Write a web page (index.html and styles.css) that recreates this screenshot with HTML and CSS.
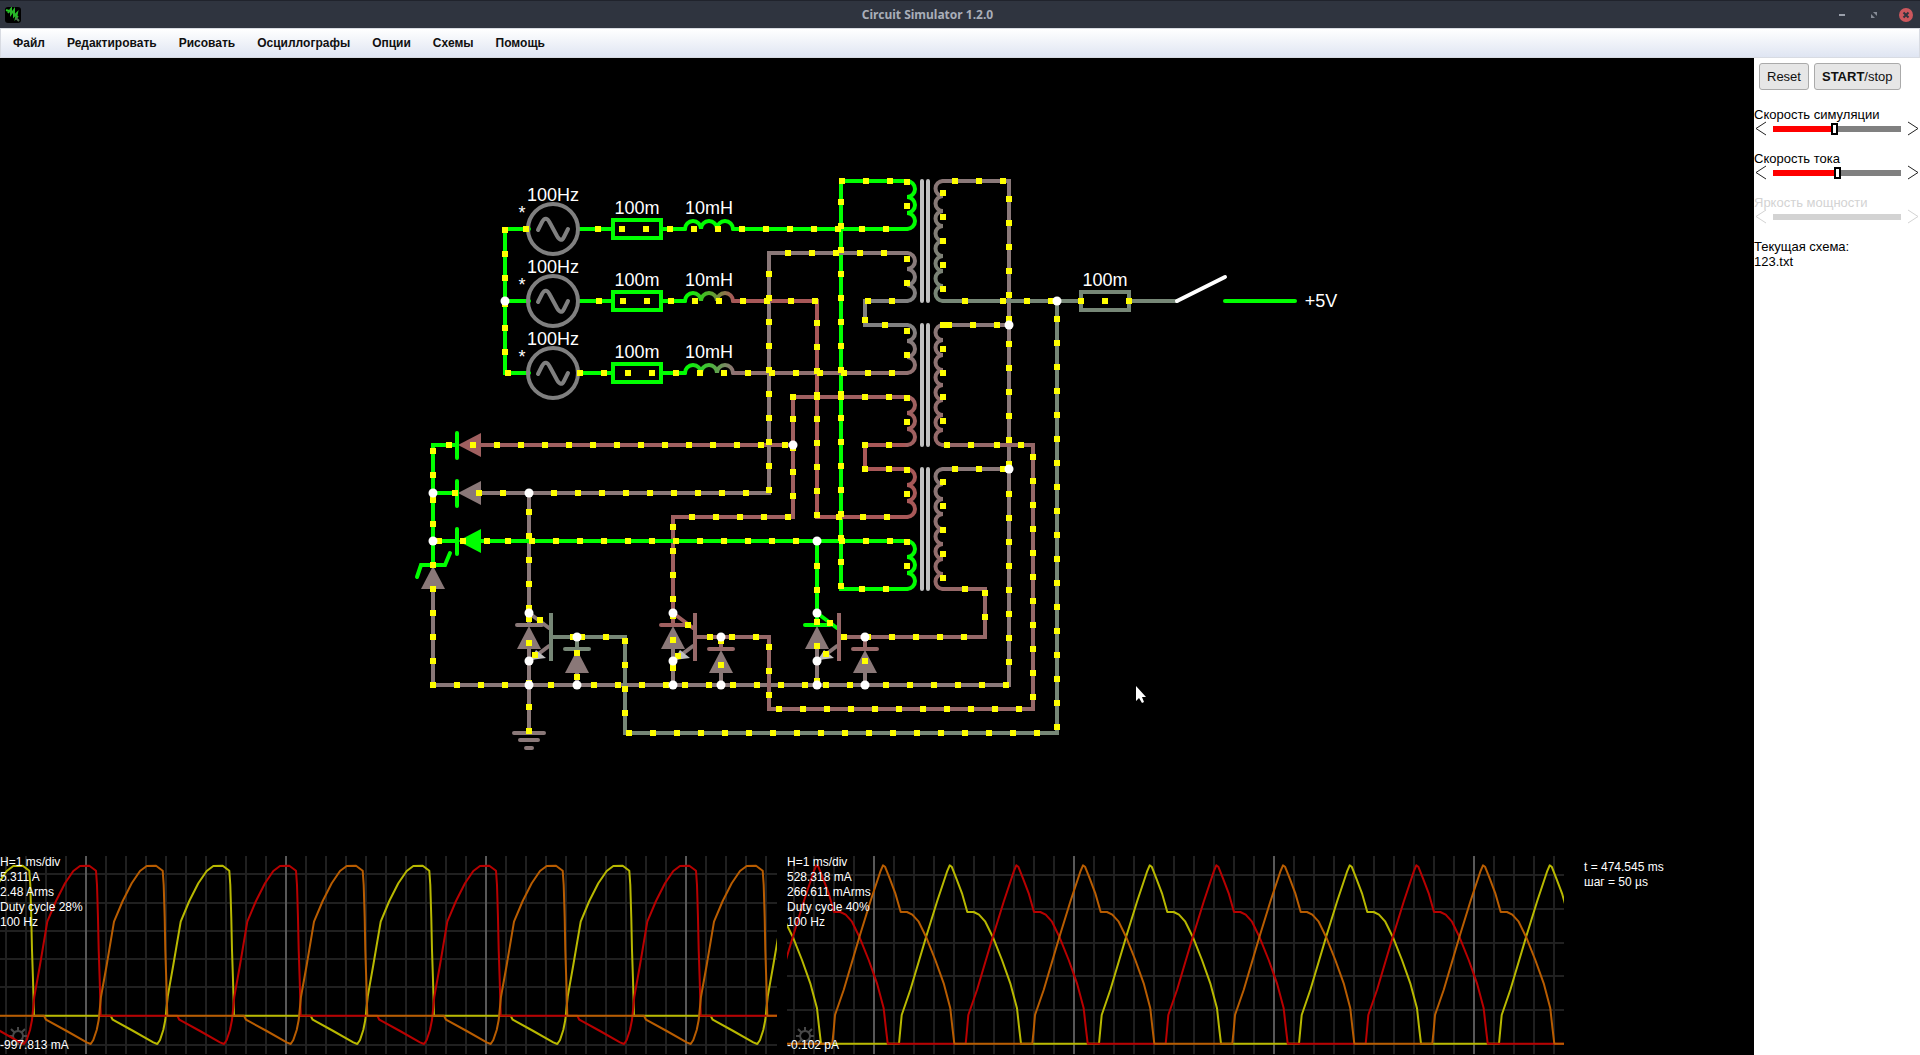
FILE: index.html
```html
<!DOCTYPE html>
<html lang="ru">
<head>
<meta charset="utf-8">
<title>Circuit Simulator 1.2.0</title>
<link rel="stylesheet" href="styles.css">
</head>
<body>
<header class="titlebar">
  <svg class="app-icon" width="16" height="16" viewBox="0 0 16 16"><rect width="16" height="16" rx="3" fill="#000"/><path d="M1 3l3 1" stroke="#20d020" stroke-width="2"/><path d="M3 6l3-4v5l3-4v6l3-3-1 5 2-2" fill="none" stroke="#28b828" stroke-width="2"/><path d="M11 11l3 3" stroke="#507050" stroke-width="2"/></svg>
  <h1 class="title">Circuit Simulator 1.2.0</h1>
  <div class="window-controls">
    <button class="win" aria-label="Minimize"><svg width="16" height="16"><path d="M5 8h6" stroke="#9a9faa" stroke-width="2"/></svg></button>
    <button class="win" aria-label="Restore"><svg width="16" height="16"><path d="M7 5h4v4zM5 7v4h4z" fill="#868b96"/></svg></button>
    <button class="win" aria-label="Close"><svg width="16" height="16"><circle cx="8" cy="8" r="7" fill="#cc575d"/><path d="M5.500 5.500l5 5m0-5l-5 5" stroke="#2f343f" stroke-width="2"/></svg></button>
  </div>
</header>
<nav class="menubar">
  <button>Файл</button><button>Редактировать</button><button>Рисовать</button><button>Осциллографы</button><button>Опции</button><button>Схемы</button><button>Помощь</button>
</nav>
<div class="workspace">
  <main class="canvas">
    <svg class="circuit" aria-label="Схема">
      <defs>
        <linearGradient id="ind2" gradientUnits="userSpaceOnUse" x1="685" y1="0" x2="733" y2="0"><stop offset="0" stop-color="#00ff00"/><stop offset="1" stop-color="#a85858"/></linearGradient>
        <linearGradient id="ind3" gradientUnits="userSpaceOnUse" x1="685" y1="0" x2="733" y2="0"><stop offset="0" stop-color="#00ff00"/><stop offset="1" stop-color="#8e7474"/></linearGradient>
        <linearGradient id="pri2" gradientUnits="userSpaceOnUse" x1="0" y1="253" x2="0" y2="301"><stop offset="0" stop-color="#8a7878"/><stop offset="1" stop-color="#808080"/></linearGradient>
        <linearGradient id="pri3" gradientUnits="userSpaceOnUse" x1="0" y1="325" x2="0" y2="373"><stop offset="0" stop-color="#808080"/><stop offset="1" stop-color="#927070"/></linearGradient>
        <linearGradient id="sec1" gradientUnits="userSpaceOnUse" x1="0" y1="181" x2="0" y2="301"><stop offset="0" stop-color="#8a7676"/><stop offset="1" stop-color="#768776"/></linearGradient>
        <linearGradient id="sec2" gradientUnits="userSpaceOnUse" x1="0" y1="325" x2="0" y2="445"><stop offset="0" stop-color="#8a7878"/><stop offset="1" stop-color="#966868"/></linearGradient>
        <linearGradient id="sec3" gradientUnits="userSpaceOnUse" x1="0" y1="469" x2="0" y2="589"><stop offset="0" stop-color="#8a7878"/><stop offset="1" stop-color="#966868"/></linearGradient>
      </defs>
      <g transform="translate(0 -58)">
        <g id="wires" class="wires"></g>
        <g id="parts" class="wires"></g>
        <g id="charges" class="charges"></g>
        <g id="nodes" fill="#fff"></g>
        <g class="labels">
          <text x="553" y="201">100Hz</text><text x="553" y="273">100Hz</text><text x="553" y="345">100Hz</text>
          <text x="522" y="219">*</text><text x="522" y="291">*</text><text x="522" y="363">*</text>
          <text x="637" y="214">100m</text><text x="637" y="286">100m</text><text x="637" y="358">100m</text>
          <text x="709" y="214">10mH</text><text x="709" y="286">10mH</text><text x="709" y="358">10mH</text>
          <text x="1105" y="286">100m</text><text x="1321" y="307">+5V</text>
        </g>
        <path d="M1136 686v15l3-3 3 5 2-1-2-5h4z" fill="#fff"/>
      </g>
    </svg>
    <div class="scopes">
      <section class="scope">
        <svg class="plot" id="scope1"></svg>
        <div class="readout"><p>H=1 ms/div</p><p>5.311 A</p><p>2.48 Arms</p><p>Duty cycle 28%</p><p>100 Hz</p><p class="low">-997.813 mA</p></div>
      </section>
      <section class="scope">
        <svg class="plot" id="scope2"></svg>
        <div class="readout"><p>H=1 ms/div</p><p>528.318 mA</p><p>266.611 mArms</p><p>Duty cycle 40%</p><p>100 Hz</p><p class="low">-0.102 pA</p></div>
      </section>
      <div class="status"><p>t = 474.545 ms</p><p>шаг = 50 µs</p></div>
    </div>
  </main>
  <aside class="sidebar">
    <div class="actions"><button class="btn">Reset</button><button class="btn"><b>START</b>/stop</button></div>
    <div class="control">
      <label for="speed">Скорость симуляции</label>
      <div class="slider"><button class="arrow" aria-label="Медленнее"><svg width="12" height="15"><path d="M11 1L1 7.500L11 14"/></svg></button><input id="speed" class="at-speed" type="range" min="0" max="121" value="58"><button class="arrow" aria-label="Быстрее"><svg width="12" height="15"><path d="M1 1L11 7.500L1 14"/></svg></button></div>
    </div>
    <div class="control">
      <label for="current">Скорость тока</label>
      <div class="slider"><button class="arrow" aria-label="Меньше"><svg width="12" height="15"><path d="M11 1L1 7.500L11 14"/></svg></button><input id="current" class="at-current" type="range" min="0" max="121" value="61"><button class="arrow" aria-label="Больше"><svg width="12" height="15"><path d="M1 1L11 7.500L1 14"/></svg></button></div>
    </div>
    <div class="control disabled">
      <label for="power">Яркость мощности</label>
      <div class="slider"><button class="arrow" disabled aria-label="Темнее"><svg width="12" height="15"><path d="M11 1L1 7.500L11 14"/></svg></button><input id="power" type="range" disabled><button class="arrow" disabled aria-label="Ярче"><svg width="12" height="15"><path d="M1 1L11 7.500L1 14"/></svg></button></div>
    </div>
    <div class="current-file"><p>Текущая схема:</p><p>123.txt</p></div>
  </aside>
</div>
<script src="app.js"></script>
</body>
</html>
```
FILE: styles.css
```css
* { box-sizing: border-box; }
body { margin: 0; height: 100vh; display: flex; flex-direction: column; overflow: hidden; font-family: "Liberation Sans", Arial, sans-serif; background: #000; }
p { margin: 0; }
button { font-family: inherit; cursor: pointer; }
.titlebar { flex: none; height: 28px; display: flex; align-items: center; padding: 0 6px 0 5px; background: #2f343f; border-top: 1px solid #20232c; color: #a9aeb9; }
.title { flex: 1; margin: 0; text-align: center; font-family: "Noto Sans", "Open Sans", sans-serif; font-size: 12px; line-height: 16px; font-weight: bold; }
.window-controls { display: flex; gap: 16px; }
.win { display: flex; padding: 0; border: 0; background: none; }
.menubar { flex: none; height: 30px; display: flex; align-items: center; padding: 0 1px; background: linear-gradient(#fff, #dfe5f2); border: 1px solid #d8dbe2; }
.menubar button { padding: 0 11px; border: 0; background: none; color: #101010; font-size: 12px; line-height: 16px; font-weight: bold; }
.workspace { flex: 1; min-height: 0; display: flex; }
.canvas { flex: 1; min-width: 0; display: flex; flex-direction: column; background: #000; }
.circuit { display: block; width: 100%; flex: 1; min-height: 0; overflow: hidden; }
.wires { fill: none; stroke-width: 4; stroke-linecap: round; }
.charges { fill: #ff0; shape-rendering: crispEdges; }
.labels { fill: #fff; font-size: 18px; text-anchor: middle; }
.scopes { flex: none; height: 200px; display: grid; grid-template-columns: 1fr 1fr 180px; column-gap: 10px; color: #fff; font-size: 12px; line-height: 15px; }
.scope { display: grid; grid-template-rows: 100%; min-width: 0; }
.plot, .readout { grid-area: 1 / 1; }
.plot { width: 100%; height: 100%; overflow: hidden; }
.trace { fill: none; stroke-width: 2; stroke-linejoin: round; }
.readout { z-index: 1; display: flex; flex-direction: column; padding: 0 0 2px; }
.low { margin-top: auto; }
.status { padding: 5px 0 0 10px; }
.sidebar { flex: none; width: 166px; background: #fff; color: #000; font-size: 13px; line-height: 15px; }
.actions { display: flex; gap: 5px; padding: 5px 5px 17px; }
.btn { height: 27px; padding: 0 7px; border: 1px solid #aaa; border-radius: 3px; background: #e6e6e6; color: #111; font-size: 13px; white-space: nowrap; }
.control { height: 44px; }
.control label { display: block; height: 14px; }
.slider { display: flex; align-items: center; justify-content: space-between; gap: 6px; padding: 0 1px; }
.arrow { display: flex; padding: 0; border: 0; background: none; }
.arrow path { fill: none; stroke: #222; stroke-width: 1; }
.slider input { appearance: none; flex: 1; min-width: 0; height: 13px; margin: 0; background: none; }
.slider input::-webkit-slider-runnable-track { height: 6px; background: #808080; }
.slider .at-speed::-webkit-slider-runnable-track { background: linear-gradient(90deg, red 48%, #808080 48%); }
.slider .at-current::-webkit-slider-runnable-track { background: linear-gradient(90deg, red 50%, #808080 50%); }
.slider input::-webkit-slider-thumb { appearance: none; width: 7px; height: 12px; margin-top: -3px; background: #fff; border: 2px solid #000; }
.disabled { color: #d3d3d3; }
.disabled .arrow path { stroke: #d3d3d3; }
.slider input:disabled::-webkit-slider-runnable-track { background: #d3d3d3; }
.slider input:disabled::-webkit-slider-thumb { visibility: hidden; }
```
FILE: app.js
```javascript
const NS = 'http://www.w3.org/2000/svg';
function add(parent, tag, attrs) {
  const el = document.createElementNS(NS, tag);
  for (const k in attrs) el.setAttribute(k, attrs[k]);
  parent.appendChild(el);
  return el;
}
const G = '#00ff00', BR = '#8a7878', RED = '#a85858', ROSE = '#a06060', PINK = '#966868', SAGE = '#768776', GREY = '#808080';

/* wires: colour, path */
const wires = document.getElementById('wires');
[
  [G, 'M529 229H505V373H529M505 301H529M579 229H613M579 301H613M579 373H613M661 229H685M661 301H685M661 373H685'],
  [G, 'M733 229H907M865 181H907M865 181H841V589H907'],
  [RED, 'M733 301H817V517H907M907 445H865V469H907'],
  ['#907070', 'M733 373H907'],
  [ROSE, 'M481 445H793M907 397H793V517H673V613'],
  [BR, 'M907 253H769V493H481M529 493V613'],
  [GREY, 'M907 301H865V325H907'],
  [G, 'M457 445H433V565M433 493H457M433 541H457M481 541H907M817 541V613'],
  [BR, 'M433 589V685H1009V181H943M943 325H1009M943 469H1009M529 649V733M673 649V685M817 649V685M577 673V685M721 673V685M865 673V685'],
  [SAGE, 'M943 301H1177M1057 301V733H625V637H553'],
  [PINK, 'M943 445H1033V709H769V637H697M943 589H985V637H841'],
  [G, 'M1225 301H1295'],
  ['#ffffff', 'M1177 301L1225 277']
].forEach(([stroke, d]) => add(wires, 'path', { stroke, d }));

const parts = document.getElementById('parts');
[229, 301, 373].forEach((y, i) => {
  add(parts, 'circle', { cx: 553, cy: y, r: 25, stroke: GREY });
  add(parts, 'path', { stroke: GREY, d: `M538 ${y + 1}L542 ${y - 7}Q546 ${y - 14} 550 ${y - 6}L557 ${y + 7}Q561 ${y + 14} 564 ${y + 8}L568 ${y}` });
  add(parts, 'rect', { x: 613, y: y - 9, width: 48, height: 18, stroke: G, 'stroke-linejoin': 'miter' });
  add(parts, 'path', { stroke: [G, 'url(#ind2)', 'url(#ind3)'][i], d: `M685 ${y}a8 8 0 0 1 16 0a8 8 0 0 1 16 0a8 8 0 0 1 16 0` });
});
add(parts, 'rect', { x: 1081, y: 292, width: 48, height: 18, stroke: SAGE, fill: '#000' });

/* transformer windings and cores */
[[181, G], [253, 'url(#pri2)'], [325, 'url(#pri3)'], [397, ROSE], [469, RED], [541, G]].forEach(([y, stroke]) =>
  add(parts, 'path', { stroke, d: `M907 ${y}` + 'a8 8 0 0 1 0 16'.repeat(3) }));
[[181, 'url(#sec1)'], [325, 'url(#sec2)'], [469, 'url(#sec3)']].forEach(([y, stroke]) => {
  add(parts, 'path', { stroke, d: `M943 ${y}` + 'a7.500 7.500 0 0 0 0 15'.repeat(8) });
  add(parts, 'path', { stroke: '#c0c0c0', d: `M922 ${y}v120M928 ${y}v120` });
});

/* rectifier diodes and the zener */
[[445, ROSE], [493, BR], [541, G]].forEach(([y, fill]) => {
  add(parts, 'path', { fill, d: `M458 ${y}L481 ${y - 12}V${y + 12}Z` });
  add(parts, 'path', { stroke: G, d: `M457 ${y - 12}v25` });
});
add(parts, 'path', { fill: BR, d: 'M433 566L445 589H421Z' });
add(parts, 'path', { stroke: G, d: 'M417 577L421 565H445L450 553' });

/* transistors with their diodes */
[[529, BR, SAGE], [673, ROSE, PINK], [817, G, PINK]].forEach(([x, top, base]) => {
  add(parts, 'path', { stroke: top, d: `M${x} 613L${x + 20} 628M${x - 12} 625H${x + 13}M${x} 613V625` });
  add(parts, 'path', { stroke: BR, d: `M${x + 20} 646L${x} 661M${x} 649V661` });
  add(parts, 'path', { fill: '#c0c0c0', d: `M${x + 1} 660L${x + 7} 650L${x + 17} 658Z` });
  add(parts, 'path', { fill: BR, d: `M${x} 626L${x + 12} 649H${x - 12}Z` });
  add(parts, 'path', { stroke: base, 'stroke-linecap': 'butt', d: `M${x + 22} 613V661` });
  add(parts, 'path', { stroke: base, d: `M${x + 48} 637V649M${x + 36} 649H${x + 60}` });
  add(parts, 'path', { fill: BR, d: `M${x + 48} 650L${x + 60} 673H${x + 36}Z` });
});
add(parts, 'path', { stroke: BR, d: 'M514 733H544M520 740H538M526 748H532' });

/* moving charges: rows are [y, from, to], columns are [x, from, to], one every 24px */
const charges = document.getElementById('charges');
const dot = (x, y) => add(charges, 'rect', { x: x - 3, y: y - 3, width: 6, height: 6 });
[
  [181, 842, 890], [181, 955, 1003], [229, 526, 526], [229, 598, 886], [253, 788, 884], [301, 599, 815], [301, 868, 892],
  [301, 965, 965], [301, 1003, 1051], [301, 1081, 1129], [325, 885, 885], [325, 943, 943], [325, 949, 997], [373, 508, 508],
  [373, 580, 892], [397, 793, 889], [445, 449, 785], [445, 865, 889], [445, 947, 971], [445, 997, 1021], [469, 865, 889],
  [469, 955, 1003], [493, 455, 503], [493, 554, 746], [517, 692, 788], [517, 839, 887], [541, 439, 487], [541, 508, 796],
  [541, 842, 890], [589, 862, 886], [589, 965, 965], [637, 573, 573], [637, 582, 606], [637, 710, 710], [637, 732, 756],
  [637, 844, 844], [637, 868, 964], [685, 433, 505], [685, 551, 551], [685, 594, 666], [685, 685, 709], [685, 733, 805],
  [685, 826, 850], [685, 886, 1006], [709, 779, 1019], [733, 629, 1037]
].forEach(([y, a, b]) => { for (let x = a; x <= b; x += 24) dot(x, y); });
[
  [433, 451, 475], [433, 500, 524], [433, 565, 661], [505, 230, 278], [505, 304, 352], [529, 512, 608], [529, 619, 643],
  [529, 683, 731], [577, 653, 677], [625, 641, 713], [673, 527, 599], [673, 616, 640], [673, 668, 668], [721, 641, 665],
  [769, 274, 490], [769, 647, 695], [793, 419, 419], [793, 448, 496], [817, 323, 515], [817, 566, 590], [817, 622, 646],
  [817, 681, 681], [841, 202, 586], [865, 320, 320], [865, 661, 661], [907, 182, 206], [907, 259, 283], [907, 331, 355],
  [907, 398, 422], [907, 470, 494], [907, 542, 566], [943, 193, 289], [943, 349, 421], [943, 482, 578], [985, 593, 617],
  [1009, 199, 319], [1009, 344, 464], [1009, 494, 662], [1033, 457, 697], [1057, 319, 727]
].forEach(([x, a, b]) => { for (let y = a; y <= b; y += 24) dot(x, y); });
[[540, 620], [535, 655], [688, 625], [678, 656], [830, 623], [826, 654]].forEach(([x, y]) => dot(x, y));

const nodes = document.getElementById('nodes');
[
  [505, 301], [433, 493], [433, 541], [529, 493], [793, 445], [817, 541], [1057, 301], [1009, 325], [1009, 469],
  [529, 613], [529, 661], [529, 685], [577, 637], [577, 685], [673, 613], [673, 661], [673, 685], [721, 637], [721, 685],
  [817, 613], [817, 661], [817, 685], [865, 637], [865, 685]
].forEach(([cx, cy]) => add(nodes, 'circle', { cx, cy, r: 4.5 }));

/* oscilloscopes: traces repeat every 200px, the three phases follow at a third of that */
function scope(id, first, major, rows, shape, offsets) {
  const svg = document.getElementById(id);
  rows.forEach(y => add(svg, 'path', { d: `M0 ${y}H2400`, 'stroke-width': 2, stroke: '#202020' }));
  for (let x = first; x < 2400; x += 20)
    add(svg, 'path', { d: `M${x} 1V199`, 'stroke-width': 2, stroke: (x - major) % 200 ? '#202020' : '#585858' });
  add(svg, 'path', { d: 'M18 176v-4M18 186v4M13 181h-4M23 181h4M14 177l-3-3M22 177l3-3M14 185l-3 3M22 185l3 3M18 176a5 5 0 1 0 .1 0', fill: 'none', stroke: '#484848', 'stroke-width': 2 });
  ['#b8b800', '#b80000', '#b85c00'].forEach((stroke, i) => {
    let d = '';
    for (let n = -2; n < 12; n++)
      for (const [x, y] of shape) d += (d ? 'L' : 'M') + ((x + offsets[i] + n * 600) / 3).toFixed(1) + ' ' + (y / 3 - 5).toFixed(1);
    add(svg, 'path', { class: 'trace', d, stroke });
  });
}
scope('scope1', 6, 86, [19, 48, 76, 104, 132, 161, 190],
  [[72, 582], [80, 570], [90, 540], [96, 510], [103, 440], [120, 345], [142, 215], [168, 153], [195, 100], [220, 63], [240, 48], [268, 47], [288, 62], [291, 105], [294, 205], [296, 300], [299, 390], [302, 497], [532, 497], [538, 509], [600, 543], [660, 577]],
  [400, 0, 200]);
scope('scope2', 7, 87, [20, 54, 88, 121, 155, 189],
  [[136, 581], [140, 540], [144, 495], [170, 420], [217, 262], [250, 155], [280, 65], [288, 46], [294, 50], [308, 85], [325, 130], [341, 186], [360, 186], [376, 194], [395, 215], [417, 260], [445, 330], [470, 400], [490, 475], [496, 530], [502, 581]],
  [200, 400, 0]);
```
